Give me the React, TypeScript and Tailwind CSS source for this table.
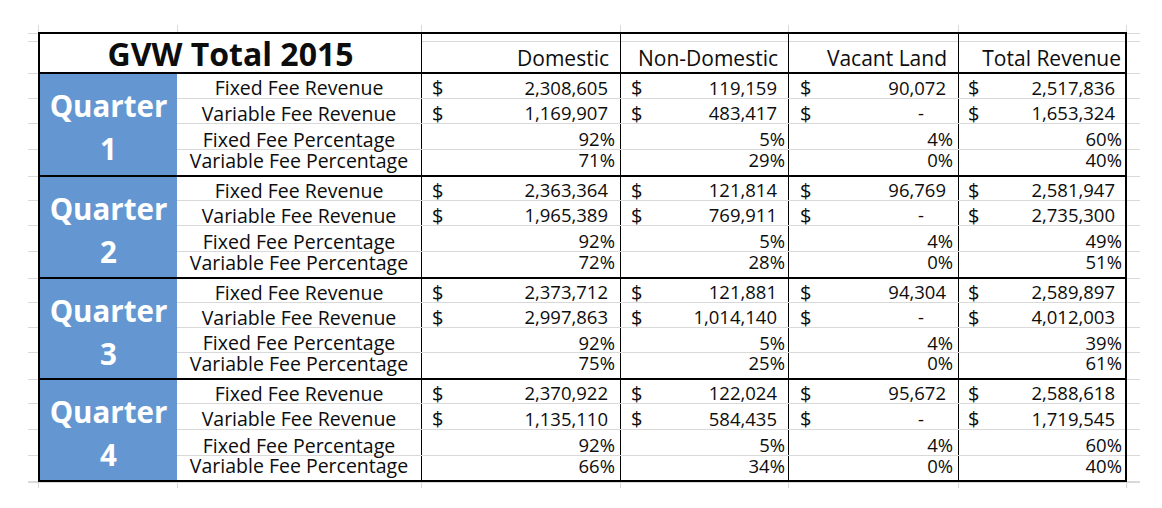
import React from 'react';

const labels = ['Fixed Fee Revenue', 'Variable Fee Revenue', 'Fixed Fee Percentage', 'Variable Fee Percentage'];

const quarters: { q: number; data: string[][] }[] = [
  { q: 1, data: [['2,308,605', '119,159', '90,072', '2,517,836'], ['1,169,907', '483,417', '-', '1,653,324'], ['92%', '5%', '4%', '60%'], ['71%', '29%', '0%', '40%']] },
  { q: 2, data: [['2,363,364', '121,814', '96,769', '2,581,947'], ['1,965,389', '769,911', '-', '2,735,300'], ['92%', '5%', '4%', '49%'], ['72%', '28%', '0%', '51%']] },
  { q: 3, data: [['2,373,712', '121,881', '94,304', '2,589,897'], ['2,997,863', '1,014,140', '-', '4,012,003'], ['92%', '5%', '4%', '39%'], ['75%', '25%', '0%', '61%']] },
  { q: 4, data: [['2,370,922', '122,024', '95,672', '2,588,618'], ['1,135,110', '584,435', '-', '1,719,545'], ['92%', '5%', '4%', '60%'], ['66%', '34%', '0%', '40%']] },
];

// row heights per block (px, incl. the gray line under each row)
const blockRowHeights = [
  ['h-[25px]', 'h-[25px]', 'h-[26px]', 'h-[25px]'],
  ['h-[24px]', 'h-[25px]', 'h-[26px]', 'h-[25px]'],
  ['h-[24px]', 'h-[25px]', 'h-[25px]', 'h-[25px]'],
  ['h-[24px]', 'h-[26px]', 'h-[26px]', 'h-[24px]'],
];

// vertical nudge of the text in each row of a block (Excel bottom alignment)
const rowPad = ['pt-[4px]', 'pt-[5px]', 'pt-[6px]', 'pb-[4px]'];

const cols = [
  { name: 'Domestic', w: 'w-[199px]', head: 'pr-[11px]', num: 'pr-[12px]', pct: 'pr-[5px]', sign: 'pl-[10px]' },
  { name: 'Non-Domestic', w: 'w-[168px]', head: 'pr-[10px]', num: 'pr-[11px]', pct: 'pr-[3px]', sign: 'pl-[10px]' },
  { name: 'Vacant Land', w: 'w-[170px]', head: 'pr-[11px]', num: 'pr-[12px]', pct: 'pr-[5px]', sign: 'pl-[11px]' },
  { name: 'Total Revenue', w: 'w-[167px]', head: 'pr-[4px]', num: 'pr-[10px]', pct: 'pr-[3px]', sign: 'pl-[9px]' },
];

// gray excel gridline stubs around the table
const stubCols = ['w-[10px]', 'w-[139px] border-l', 'w-[244px] border-l', 'w-[199px] border-l', 'w-[168px] border-l', 'w-[170px] border-l', 'w-[168px] border-l', 'w-[14px] border-l'];
const stubRows = ['h-[2px]', 'h-[8px]', 'h-[32px]', 'h-[25px]', 'h-[25px]', 'h-[26px]', 'h-[27px]', 'h-[24px]', 'h-[25px]', 'h-[26px]', 'h-[27px]', 'h-[24px]', 'h-[25px]', 'h-[25px]', 'h-[27px]', 'h-[24px]', 'h-[26px]', 'h-[26px]', 'h-[26px]'];

const Stubs = ({ width }: { width: string }) => (
  <div className={`flex flex-col ${width}`}>
    {stubRows.map((h, i) => (
      <div key={i} className={`${h} border-b border-[#d9d9d9]`} />
    ))}
  </div>
);

const ValueCell = ({ col, value, row }: { col: (typeof cols)[number]; value: string; row: number }) => {
  if (row < 2) {
    return (
      <div className={`${col.w} flex h-full items-center justify-between border-l border-black ${rowPad[row]} ${col.sign} ${value === '-' ? 'pr-[34px]' : col.num}`}>
        <span className="text-[20px]">$</span>
        <span>{value}</span>
      </div>
    );
  }
  return (
    <div className={`${col.w} flex h-full items-center justify-end border-l border-black ${rowPad[row]} ${col.pct}`}>
      {value}
    </div>
  );
};

const Block = ({ q, data, idx }: { q: number; data: string[][]; idx: number }) => (
  <div className={`flex ${idx > 0 ? 'border-t-2 border-black' : ''}`}>
    <div className="w-[137px] bg-[#6497d1] pt-[10px] text-center text-[29.5px] font-bold leading-[43px] text-white">
      <div>Quarter</div>
      <div>{q}</div>
    </div>
    <div className="flex flex-col">
      {data.map((vals, r) => (
        <div
          key={r}
          className={`flex ${blockRowHeights[idx][r]} ${r < 3 ? 'border-b border-[#d9d9d9]' : ''}`}
        >
          <div className={`flex w-[244px] items-center justify-center text-[19.5px] leading-[18px] ${rowPad[r]}`}>{labels[r]}</div>
          {cols.map((c, ci) => (
            <ValueCell key={c.name} col={c} value={vals[ci]} row={r} />
          ))}
        </div>
      ))}
    </div>
  </div>
);

export default function App() {
  return (
    <div className="h-[508px] w-[1162px] bg-white pt-[25px] pl-[28px] font-['Open_Sans',sans-serif] text-[18.5px] leading-none text-[#0d0d0d]">
      <div className="flex h-[7px]">
        {stubCols.map((c, i) => (
          <div key={i} className={`${c} border-[#d9d9d9]`} />
        ))}
      </div>
      <div className="flex">
        <Stubs width="w-[10px]" />
        <div className="border-2 border-black">
          <div className="flex h-[40px] border-b-2 border-black">
            <div className="flex w-[381px] items-center justify-center pt-[2px] text-[32px] font-bold">GVW Total 2015</div>
            {cols.map(c => (
              <div key={c.name} className={`${c.w} flex flex-col border-l border-black`}>
                <div className="h-[8px] border-b border-[#d9d9d9]" />
                <div className={`flex flex-1 items-center justify-end pt-[2px] text-[21px] whitespace-nowrap ${c.head}`}>{c.name}</div>
              </div>
            ))}
          </div>
          {quarters.map((b, i) => (
            <Block key={b.q} q={b.q} data={b.data} idx={i} />
          ))}
        </div>
        <Stubs width="w-[13px]" />
      </div>
      <div className="flex h-[6px] w-[1112px] border-t border-[#d9d9d9]">
        {stubCols.map((c, i) => (
          <div key={i} className={`${c} border-[#d9d9d9]`} />
        ))}
      </div>
    </div>
  );
}
